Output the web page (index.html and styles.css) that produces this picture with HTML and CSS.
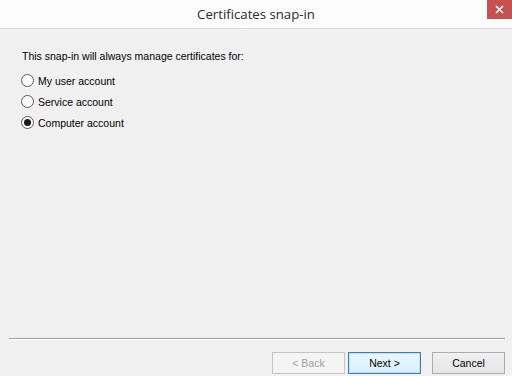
FILE: index.html
```html
<!DOCTYPE html>
<html lang="en">
<head>
    <meta charset="UTF-8">
    <title>Certificates snap-in</title>
    <link rel="stylesheet" href="styles.css">
</head>
<body>
    <div class="dialog">
        <header class="titlebar">
            <span class="title">Certificates snap-in</span>
            <button class="close" aria-label="Close">
                <svg width="9" height="9" viewBox="0 0 9 9">
                    <path d="M1 1 L8 8 M8 1 L1 8" stroke="#fff" stroke-width="1.6"/>
                </svg>
            </button>
        </header>

        <main class="content">
            <p class="prompt">This snap-in will always manage certificates for:</p>
            <label class="option"><span class="radio"></span>My user account</label>
            <label class="option"><span class="radio"></span>Service account</label>
            <label class="option"><span class="radio checked"></span>Computer account</label>
        </main>

        <footer class="footer">
            <div class="separator"></div>
            <div class="buttons">
                <button class="btn disabled">&lt; Back</button>
                <button class="btn default">Next &gt;</button>
                <button class="btn cancel">Cancel</button>
            </div>
        </footer>
    </div>
</body>
</html>
```

FILE: styles.css
```css
* {
    margin: 0;
    padding: 0;
    box-sizing: border-box;
}

body {
    background: #f0f0f0;
    font-family: 'Liberation Sans', Arial, sans-serif;
    font-size: 10.5px;
    color: #000;
}

.dialog {
    width: 512px;
    height: 376px;
    display: flex;
    flex-direction: column;
}

.titlebar {
    position: relative;
    height: 29px;
    background: #fcfcfc;
    border-bottom: 1px solid #dadada;
    display: flex;
    justify-content: center;
    align-items: center;
}

.title {
    font-family: 'Open Sans', 'Noto Sans', sans-serif;
    font-size: 13.2px;
    color: #2b2b2b;
    padding-bottom: 1px;
}

.close {
    position: absolute;
    top: 0;
    right: 0;
    width: 25px;
    height: 19px;
    border: none;
    background: #c75050;
    display: flex;
    justify-content: center;
    align-items: center;
}

.content {
    flex: 1;
    padding: 21px 22px 0 22px;
}

.prompt {
    margin-bottom: 7px;
    line-height: 13px;
}

.option {
    display: flex;
    align-items: center;
    gap: 4px;
    height: 21px;
    margin-left: -1px;
}

.radio {
    width: 13px;
    height: 13px;
    border-radius: 50%;
    border: 1px solid #5a5a5a;
    background: #fff;
    display: flex;
    justify-content: center;
    align-items: center;
}

.radio.checked::after {
    content: '';
    width: 7px;
    height: 7px;
    border-radius: 50%;
    background: #1a1a1a;
}

.footer {
    padding: 0 7px 2px 9px;
}

.separator {
    height: 2px;
    border-top: 1px solid #a0a0a0;
    border-bottom: 1px solid #fff;
}

.buttons {
    display: flex;
    justify-content: flex-end;
    padding: 12px 0 0 0;
}

.btn {
    width: 73px;
    height: 22px;
    font-family: 'Liberation Sans', Arial, sans-serif;
    font-size: 10.5px;
    border: 1px solid #acacac;
    background: linear-gradient(#f0f0f0, #e5e5e5);
    color: #000;
}

.btn.disabled {
    color: #a0a0a0;
    border-color: #c5c5c5;
    background: #f4f4f4;
}

.btn.default {
    margin: 0 11px 0 3px;
    border-color: #3c7fb1;
    background: linear-gradient(#eaf6fd, #d9f0fc);
    box-shadow: inset 0 0 0 1px #bde0f8;
}
```
